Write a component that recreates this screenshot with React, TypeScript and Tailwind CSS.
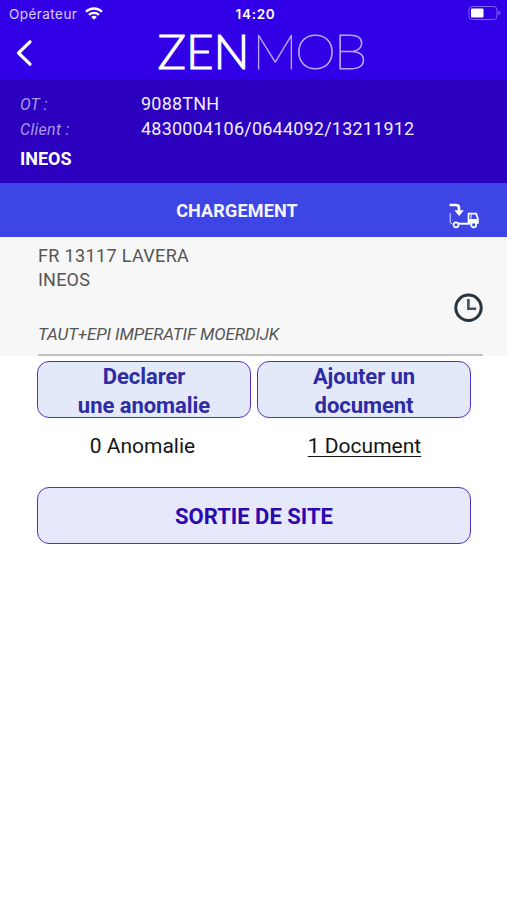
function StatusBar() {
  return (
    <div className="grid h-7 grid-cols-[1fr_auto_1fr] items-center pl-[9px] pr-[5px] text-[13px] leading-7 text-white">
      <div className="flex items-center gap-[7px]">
        <span className="w-[69px] whitespace-nowrap font-['Inter',sans-serif] text-[13.5px] tracking-[0.45px] text-[#d9d0ff]">Opérateur</span>
        <svg className="mb-[2px]" width="18" height="13" viewBox="0 0 18 13" fill="none" stroke="#fff" strokeWidth="2.3">
          <path d="M1 4.8a11.4 11.4 0 0 1 16 0" />
          <path d="M4 7.9a7.2 7.2 0 0 1 10 0" />
          <path d="M6.2 10 9 12.8l2.8-2.8a4 4 0 0 0-5.6 0Z" fill="#fff" stroke="none" />
        </svg>
      </div>
      <span className="font-['Inter',sans-serif] text-[13.5px] font-semibold tracking-[0.7px]">14:20</span>
      <svg className="mb-[2px] justify-self-end" width="34" height="16" viewBox="0 0 34 16">
        <rect x="1" y="1.5" width="28" height="13" rx="3.5" fill="none" stroke="#8066f5" />
        <rect x="3" y="3.5" width="12.5" height="9" rx="1" fill="#fff" />
        <path d="M30.5 6v4q2-.6 2-2t-2-2Z" fill="#8066f5" />
      </svg>
    </div>
  );
}

function Header() {
  return (
    <header className="h-[79px] bg-[#3100e6]">
      <StatusBar />
      <div className="grid h-[51px] grid-cols-[158px_210px_1fr] items-center">
        <svg className="mb-[2px] ml-[15px]" width="20" height="28" viewBox="0 0 20 28" fill="none" stroke="#fff" strokeWidth="3.2" strokeLinecap="round" strokeLinejoin="round">
          <path d="M15 2.8 3.5 14 15 25.2" />
        </svg>
        <svg className="overflow-visible" width="210" height="51" viewBox="0 0 210 51" fontFamily="Lato, sans-serif" fontSize="47" fill="#fff">
          <text x="-0.5" y="41.3" fontWeight="300" textLength="92" lengthAdjust="spacingAndGlyphs" stroke="#fff" strokeWidth="1.1">ZEN</text>
          <g fontWeight="100" fill="#b6a4fb" stroke="#b6a4fb" strokeWidth="0.8">
            <text x="94.5" y="41.3" textLength="45" lengthAdjust="spacingAndGlyphs">M</text>
            <text x="137" y="41.3" textLength="41" lengthAdjust="spacingAndGlyphs">O</text>
            <text x="175.5" y="41.3" textLength="34" lengthAdjust="spacingAndGlyphs">B</text>
          </g>
        </svg>
      </div>
    </header>
  );
}

function OrderInfo() {
  return (
    <section className="h-[104px] bg-[#2b00bf] pl-5 pt-[13px] text-[18px] leading-6 text-[#f0edff]">
      <dl className="grid grid-cols-[121px_1fr] gap-y-px">
        <dt className="pt-[2px] text-[16px] italic leading-[22px] tracking-[0.15px] text-[#a99ae6]">OT :</dt>
        <dd className="tracking-[0.2px]">9088TNH</dd>
        <dt className="pt-[2px] text-[16px] italic leading-[22px] tracking-[0.3px] text-[#a99ae6]">Client :</dt>
        <dd className="tracking-[0.21px]">4830004106/0644092/13211912</dd>
      </dl>
      <p className="mt-[6px] font-bold text-white">INEOS</p>
    </section>
  );
}

function TruckIcon() {
  return (
    <svg width="32" height="28" viewBox="0 0 32 28" fill="none" stroke="#fff" strokeWidth="1.7">
      <path d="M1.5 3H8q3 0 3 3v3" strokeWidth="2.6" />
      <path d="M6.4 8.2h9.4L11.1 14Z" fill="#fff" stroke="none" />
      <path d="M2.2 11v9.5l2 1.5" strokeWidth="1" strokeOpacity="0.8" />
      <path d="M11 21.7h11" strokeWidth="2" />
      <path d="M20.5 21V11.7h7.6l1.8 5V21h-2" />
      <path d="M20.5 17h9.4v4.6h-9.4Z" fill="#fff" stroke="none" />
      <path d="M23 11.5v5" strokeWidth="1" />
      <circle cx="8" cy="22.8" r="2.5" fill="#3d46e5" />
      <circle cx="25.7" cy="22.8" r="2.5" fill="#3d46e5" />
    </svg>
  );
}

function ActionButton({ lines }: { lines: string[] }) {
  return (
    <button className="h-[57px] rounded-[12px] border border-[#5030c4] bg-[#e4e9fa] text-[22px] font-bold leading-[29px] tracking-[-0.05px] text-[#2d2ca5]">
      {lines.map((line) => (
        <span key={line} className="block">{line}</span>
      ))}
    </button>
  );
}

export default function App() {
  return (
    <main className="h-[900px] w-[507px] overflow-hidden bg-white font-['Roboto',sans-serif]">
      <Header />
      <OrderInfo />
      <section className="grid h-[54px] grid-cols-[1fr_122px_1fr] items-center bg-[#3d46e5] pr-[33px]">
        <h1 className="col-start-2 whitespace-nowrap text-center text-[18px] font-bold tracking-[0.15px] text-[#f5f4ff]">CHARGEMENT</h1>
        <div className="-mr-[6px] justify-self-end pt-[12px]"><TruckIcon /></div>
      </section>
      <section className="flex h-[119px] justify-between bg-[#f7f7f7] pl-[38px] pr-6 text-[#555]">
        <div className="w-full border-b-2 border-[#c2c2c2] pt-[7px]">
          <div className="flex justify-between">
            <div className="text-[18px] leading-6">
              <p className="tracking-[0.35px]">FR 13117 LAVERA</p>
              <p className="tracking-[0.2px]">INEOS</p>
              <p className="mt-[30px] text-[17px] italic tracking-[-0.12px]">TAUT+EPI IMPERATIF MOERDIJK</p>
            </div>
            <svg className="mt-[49px]" width="30" height="30" viewBox="0 0 30 30" fill="none" stroke="#29353d" strokeWidth="3">
              <circle cx="15.5" cy="14.8" r="12.7" />
              <path d="M15.4 6v9.8h7.8" stroke="#46505a" strokeWidth="2.6" />
            </svg>
          </div>
        </div>
      </section>
      <section className="pl-[37px] pr-9 pt-[5px]">
        <div className="grid grid-cols-[214px_214px] gap-[6px]">
          <ActionButton lines={["Declarer", "une anomalie"]} />
          <ActionButton lines={["Ajouter un", "document"]} />
        </div>
        <div className="grid grid-cols-[214px_214px] gap-[6px] pt-[13px] text-center text-[21px] leading-[30px] text-[#151515]">
          <p className="pr-[3px]">0 Anomalie</p>
          <p className="pl-[1px] underline decoration-1 underline-offset-[3px]">1 Document</p>
        </div>
        <button className="mt-[26px] h-[57px] w-full rounded-[12px] border border-[#5030c4] bg-[#e6e9fb] pt-[2px] text-[22px] font-bold text-[#2c08b0]">
          SORTIE DE SITE
        </button>
      </section>
    </main>
  );
}
